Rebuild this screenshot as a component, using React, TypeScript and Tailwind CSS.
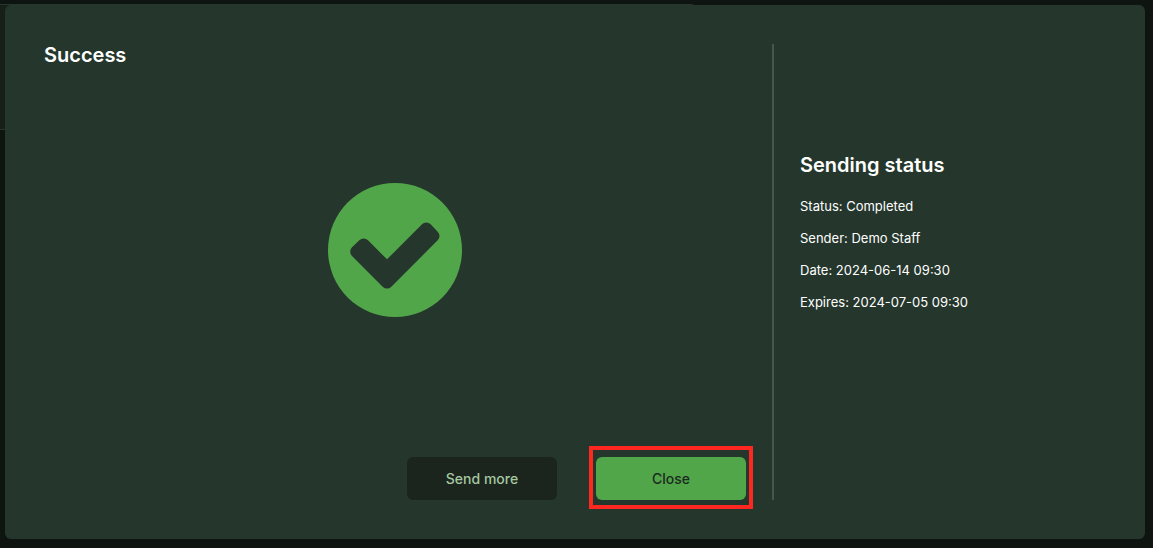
const details = [
  { label: 'Status', value: 'Completed' },
  { label: 'Sender', value: 'Demo Staff' },
  { label: 'Date', value: '2024-06-14 09:30' },
  { label: 'Expires', value: '2024-07-05 09:30' },
];

function SuccessIcon() {
  return (
    <svg viewBox="0 0 402 402" className="size-[134px]" role="img" aria-label="Success">
      <circle cx="201" cy="201" r="201" fill="#52a64a" />
      <path
        fill="#25372c"
        d="M72 193 L94 172 A18 18 0 0 1 120 172 L177 229 L282 124 A18 18 0 0 1 308 124 L329 146 A18 18 0 0 1 329 172 L190 311 A18 18 0 0 1 164 311 L72 219 A18 18 0 0 1 72 193 Z"
      />
    </svg>
  );
}

export default function App() {
  return (
    <div className="relative flex min-h-screen flex-col bg-[#0e1510] pt-[5px] pr-2 pb-[9px] pl-[5px] font-['Inter',sans-serif] text-white">
      <div
        aria-hidden="true"
        className="absolute top-1 left-0 h-[126px] w-[695px] rounded-tr border-y border-[#25372c] bg-[#161f18]"
      />
      <section
        role="dialog"
        aria-labelledby="dialog-title"
        className="relative flex flex-1 rounded-md bg-[#25372c] py-[39px] pr-10 pl-[39px]"
      >
        <div className="flex flex-1 flex-col pr-[19px]">
          <h1 id="dialog-title" className="text-xl leading-[22px] font-semibold">
            Success
          </h1>
          <div className="flex flex-1 items-center justify-center pr-2 pb-3">
            <SuccessIcon />
          </div>
          <div className="flex items-end justify-end gap-8">
            <button
              type="button"
              className="h-[43px] w-[150px] rounded-md bg-[#1b251e] text-sm font-medium text-[#a5c8a0]"
            >
              Send more
            </button>
            <div className="-mb-[9px] border-4 border-[#ff2720] px-[3px] pt-[7px] pb-[5px]">
              <button
                type="button"
                className="block h-[43px] w-[150px] rounded-md bg-[#52a64a] text-sm font-medium text-[#1b2a1e]"
              >
                Close
              </button>
            </div>
          </div>
        </div>
        <aside className="flex w-[333px] shrink-0 flex-col justify-center border-l-2 border-[#46574b] pb-[79px] pl-[26px]">
          <h2 className="text-xl leading-[22px] font-semibold">Sending status</h2>
          <ul className="mt-5 flex flex-col gap-3 text-[13px] leading-5">
            {details.map(({ label, value }) => (
              <li key={label}>
                {label}: {value}
              </li>
            ))}
          </ul>
        </aside>
      </section>
    </div>
  );
}
